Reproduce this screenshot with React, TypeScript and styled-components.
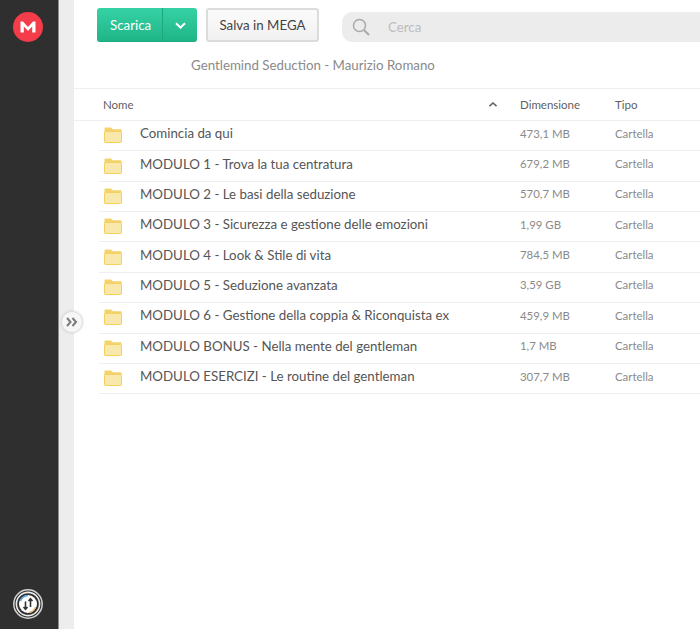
import React from "react";
import styled, { createGlobalStyle } from "styled-components";

const Global = createGlobalStyle`
  html, body { margin: 0; padding: 0; height: 100%; overflow: hidden; background: #fff; }
  body { font-family: Lato, "Liberation Sans", sans-serif; }
  #root { height: 100%; }
`;

const Page = styled.div`
  display: flex;
  width: 700px;
  height: 629px;
  overflow: hidden;
`;

const Sidebar = styled.aside`
  box-sizing: border-box;
  flex: 0 0 59px;
  display: flex;
  flex-direction: column;
  align-items: center;
  justify-content: space-between;
  padding: 12px 3px 10px 0;
  background: #2f2f2f;
  border-right: 1px solid #8c8c8c;
`;

const Gutter = styled.div`
  position: relative;
  flex: 0 0 15px;
  background: #ededed;
`;

const Expand = styled.button`
  position: absolute;
  left: 2px;
  top: 311px;
  width: 22px;
  height: 22px;
  padding: 0;
  display: flex;
  align-items: center;
  justify-content: center;
  border: 1px solid #dedede;
  border-radius: 50%;
  background: #f7f7f7;
  box-shadow: 0 0 3px rgba(0, 0, 0, 0.12);
`;

const Main = styled.main`
  flex: 1;
  min-width: 0;
  background: #fff;
`;

const Top = styled.header`
  box-sizing: border-box;
  height: 89px;
  border-bottom: 1px solid #efefef;
  padding: 8px 0 0 23px;
`;

const Actions = styled.div`
  display: flex;
  align-items: center;
`;

const Download = styled.div`
  display: flex;
  width: 100px;
  height: 34px;
  border-radius: 3px;
  overflow: hidden;
  color: #fff;
  background: linear-gradient(180deg, #35d2a5 0%, #1fb486 100%);
  box-shadow: inset 0 -1px 0 rgba(0, 0, 0, 0.06);
`;

const DownloadLabel = styled.span`
  flex: 0 0 66px;
  padding-left: 13px;
  box-sizing: border-box;
  font-size: 13.3px;
  line-height: 34px;
  border-right: 1px solid #1ea67d;
`;

const DownloadCaret = styled.span`
  flex: 1;
  display: flex;
  align-items: center;
  justify-content: center;
`;

const Save = styled.button`
  box-sizing: border-box;
  width: 113px;
  height: 34px;
  margin-left: 9px;
  padding: 0;
  border: 2px solid #dcdcdc;
  border-radius: 3px;
  background: linear-gradient(180deg, #fbfbfb 0%, #f1f1f1 100%);
  color: #444;
  font: 13.3px Lato, "Liberation Sans", sans-serif;
`;

const Search = styled.div`
  flex: 1;
  height: 30px;
  margin: 4px 0 0 23px;
  display: flex;
  align-items: center;
  padding-left: 10px;
  border-radius: 10px 0 0 10px;
  background: #ececec;
`;

const SearchText = styled.span`
  margin-left: 18px;
  font-size: 13.3px;
  color: #bcbcbc;
`;

const Title = styled.div`
  margin: 15px 0 0 94px;
  font-size: 13.3px;
  line-height: 17px;
  color: #8a8a8a;
`;

const HeadRow = styled.div`
  box-sizing: border-box;
  height: 32px;
  display: grid;
  grid-template-columns: 446px 95px 1fr;
  align-items: center;
  padding-bottom: 1px;
  border-bottom: 1px solid #efefef;
  font-size: 11.5px;
  color: #5f5f5f;
`;

const NameHead = styled.div`
  display: flex;
  align-items: center;
  justify-content: space-between;
  padding: 0 23px 0 29px;
`;

const Rows = styled.div`
  margin-left: 25px;
`;

const Row = styled.div`
  box-sizing: border-box;
  height: 30.36px;
  display: grid;
  grid-template-columns: 421px 95px 1fr;
  align-items: center;
  padding-bottom: 5px;
  border-bottom: 1px solid #efefef;
`;

const NameCell = styled.div`
  display: flex;
  align-items: center;
  padding-left: 5px;
  font-size: 13.3px;
  color: #555;
  white-space: nowrap;
`;

const FolderSlot = styled.span`
  display: flex;
  flex: 0 0 36px;
  margin-top: 4px;
`;

const Meta = styled.div`
  font-size: 11.4px;
  color: #8a8a8a;
`;

const folders: [string, string][] = [
  ["Comincia da qui", "473,1 MB"],
  ["MODULO 1 - Trova la tua centratura", "679,2 MB"],
  ["MODULO 2 - Le basi della seduzione", "570,7 MB"],
  ["MODULO 3 - Sicurezza e gestione delle emozioni", "1,99 GB"],
  ["MODULO 4 - Look & Stile di vita", "784,5 MB"],
  ["MODULO 5 - Seduzione avanzata", "3,59 GB"],
  ["MODULO 6 - Gestione della coppia & Riconquista ex", "459,9 MB"],
  ["MODULO BONUS - Nella mente del gentleman", "1,7 MB"],
  ["MODULO ESERCIZI - Le routine del gentleman", "307,7 MB"],
];

const Folder = () => (
  <svg width="18" height="16" viewBox="0 0 18 16">
    <path d="M0.5 1.2C0.5 0.8 0.8 0.5 1.2 0.5H7L8.8 2.3H16.8C17.2 2.3 17.5 2.6 17.5 3V5H0.5Z" fill="#f2d36d" />
    <path d="M1.2 4.5H16.8C17.2 4.5 17.5 4.8 17.5 5.2V14.8C17.5 15.2 17.2 15.5 16.8 15.5H1.2C0.8 15.5 0.5 15.2 0.5 14.8V5.2C0.5 4.8 0.8 4.5 1.2 4.5Z" fill="#f8e8ab" stroke="#f4d05e" />
  </svg>
);

const Logo = () => (
  <svg width="30" height="30" viewBox="0 0 30 30">
    <circle cx="15" cy="15" r="15" fill="#f53c4a" />
    <path d="M7.5 20.5V9.5H10L15 15L20 9.5H22.5V20.5H19.2V14.5L15 19L10.8 14.5V20.5Z" fill="#fff" />
  </svg>
);

const Transfer = () => (
  <svg width="30" height="30" viewBox="0 0 30 30">
    <circle cx="15" cy="15" r="14.2" fill="none" stroke="#d4d4d4" strokeWidth="1.5" />
    <circle cx="15" cy="15" r="11.6" fill="none" stroke="#ececec" strokeWidth="1.6" />
    <circle cx="15" cy="15" r="9" fill="#fff" />
    <path d="M7.5 12A8.5 8.5 0 0 1 15 6.5" fill="none" stroke="#5aa9e6" strokeWidth="1.5" />
    <path d="M22.5 18A8.5 8.5 0 0 1 16 23.5" fill="none" stroke="#f0b060" strokeWidth="1.2" />
    <path d="M12.5 12.5V20M10.5 18L12.5 20.2L14.5 18M17.5 18V10M15.5 12L17.5 9.8L19.5 12" fill="none" stroke="#333" strokeWidth="1.6" />
  </svg>
);

export default function App() {
  return (
    <Page>
      <Global />
      <Sidebar>
        <Logo />
        <Transfer />
      </Sidebar>
      <Gutter>
        <Expand aria-label="Espandi">
          <svg width="14" height="10" viewBox="0 0 14 10">
            <path d="M2 1L5.5 5L2 9M7.5 1L11 5L7.5 9" fill="none" stroke="#7b7b7b" strokeWidth="2" />
          </svg>
        </Expand>
      </Gutter>
      <Main>
        <Top>
          <Actions>
            <Download>
              <DownloadLabel>Scarica</DownloadLabel>
              <DownloadCaret>
                <svg width="11" height="7" viewBox="0 0 11 7">
                  <path d="M1 1.2L5.5 5.5L10 1.2" fill="none" stroke="#fff" strokeWidth="2" />
                </svg>
              </DownloadCaret>
            </Download>
            <Save>Salva in MEGA</Save>
            <Search>
              <svg width="18" height="18" viewBox="0 0 18 18">
                <circle cx="7.5" cy="7.5" r="6" fill="none" stroke="#a9a9a9" strokeWidth="1.5" />
                <path d="M12 12L17 17" stroke="#a9a9a9" strokeWidth="2" />
              </svg>
              <SearchText>Cerca</SearchText>
            </Search>
          </Actions>
          <Title>Gentlemind Seduction - Maurizio Romano</Title>
        </Top>
        <HeadRow>
          <NameHead>
            <span>Nome</span>
            <svg width="8" height="5" viewBox="0 0 8 5">
              <path d="M0.5 4.2L4 1L7.5 4.2" fill="none" stroke="#666" strokeWidth="1.6" />
            </svg>
          </NameHead>
          <span>Dimensione</span>
          <span>Tipo</span>
        </HeadRow>
        <Rows>
          {folders.map(([name, size]) => (
            <Row key={name}>
              <NameCell>
                <FolderSlot>
                  <Folder />
                </FolderSlot>
                {name}
              </NameCell>
              <Meta>{size}</Meta>
              <Meta>Cartella</Meta>
            </Row>
          ))}
        </Rows>
      </Main>
    </Page>
  );
}
